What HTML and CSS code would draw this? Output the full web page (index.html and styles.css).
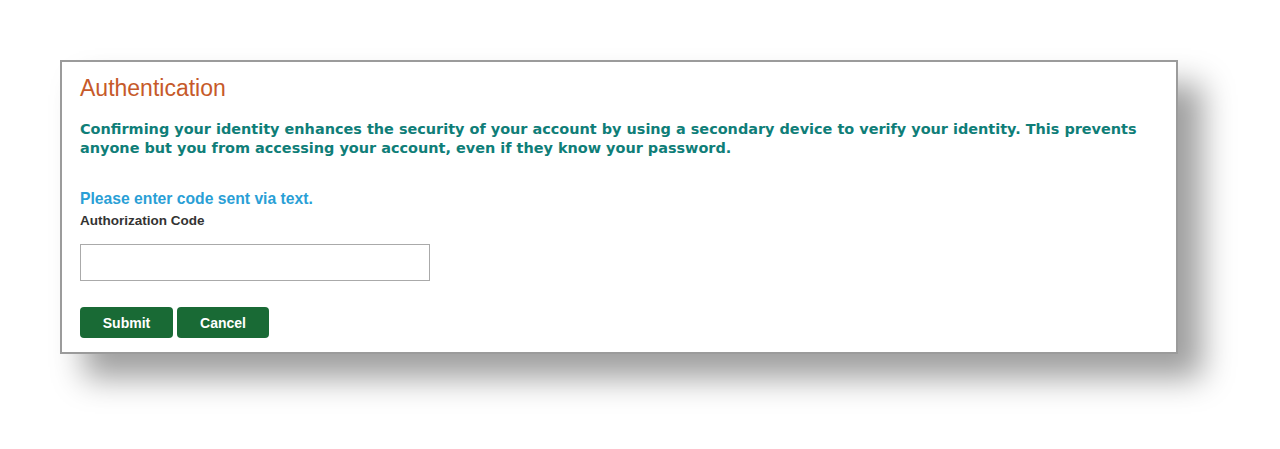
FILE: index.html
```html
<!DOCTYPE html>
<html lang="en">
<head>
<meta charset="utf-8">
<title>Authentication</title>
<link rel="stylesheet" href="styles.css">
</head>
<body>
<div class="page">
  <div class="card">
    <h1 class="title">Authentication</h1>
    <p class="intro">Confirming your identity enhances the security of your account by using a secondary device to verify your identity. This prevents anyone but you from accessing your account, even if they know your password.</p>
    <p class="prompt">Please enter code sent via text.</p>
    <label class="label" for="code">Authorization Code</label>
    <input class="code-input" id="code" type="text">
    <div class="actions">
      <button class="btn" type="button">Submit</button>
      <button class="btn" type="button">Cancel</button>
    </div>
  </div>
</div>
</body>
</html>
```
FILE: styles.css
```css
html, body {
  margin: 0;
  padding: 0;
  background: #ffffff;
}
body {
  min-height: 449px;
}
.page {
  padding: 60px 0 95px 60px;
}
.card {
  box-sizing: border-box;
  width: 1118px;
  height: 294px;
  border: 2px solid #9b9b9b;
  background: #ffffff;
  box-shadow: 24px 24px 30px rgba(0, 0, 0, 0.38);
  padding: 12px 18px 0 18px;
  display: flex;
  flex-direction: column;
  align-items: flex-start;
}
.title {
  margin: 0;
  font-family: "Liberation Sans", Arial, sans-serif;
  font-weight: normal;
  font-size: 23px;
  line-height: 28px;
  color: #c65a2a;
}
.intro {
  margin: 18px 0 0 0;
  font-family: "DejaVu Sans", Verdana, sans-serif;
  font-weight: bold;
  font-size: 14.45px;
  line-height: 19px;
  color: #0f7e78;
  max-width: 1075px;
}
.prompt {
  margin: 32px 0 0 0;
  font-family: "Liberation Sans", Arial, sans-serif;
  font-weight: bold;
  font-size: 15.7px;
  line-height: 18px;
  color: #2a9fd6;
}
.label {
  margin-top: 5px;
  font-family: "Liberation Sans", Arial, sans-serif;
  font-weight: bold;
  font-size: 13.5px;
  line-height: 16px;
  color: #333333;
}
.code-input {
  box-sizing: border-box;
  margin-top: 15px;
  width: 350px;
  height: 37px;
  border: 1px solid #aaaaaa;
  padding: 0 6px;
  font-family: "Liberation Sans", Arial, sans-serif;
  font-size: 14px;
}
.actions {
  margin-top: 26px;
  display: flex;
  gap: 4px;
}
.btn {
  box-sizing: border-box;
  height: 31px;
  width: 93px;
  border: none;
  border-radius: 4px;
  background: #196a35;
  color: #ffffff;
  font-family: "Liberation Sans", Arial, sans-serif;
  font-weight: bold;
  font-size: 14px;
  padding: 0;
}
.btn + .btn {
  width: 92px;
}
```
